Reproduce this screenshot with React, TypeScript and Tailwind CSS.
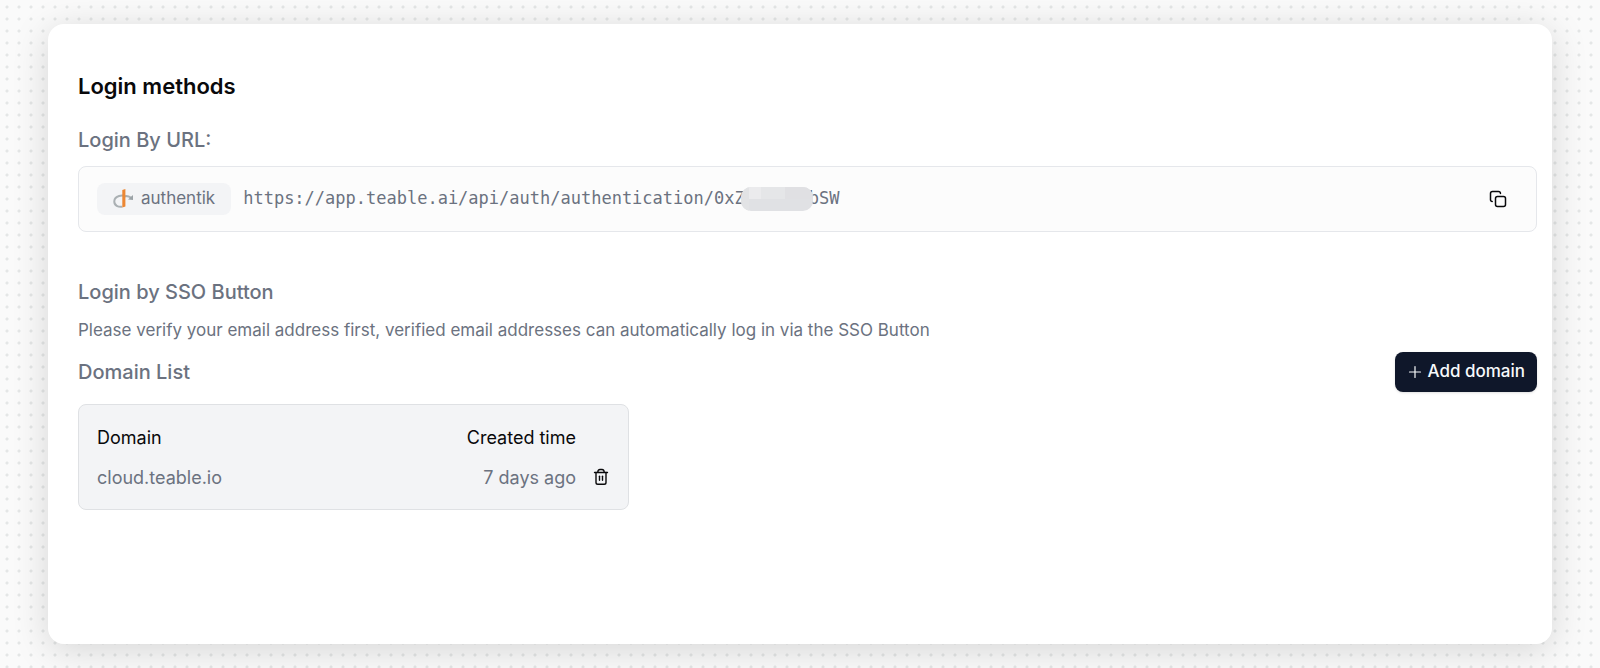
import React from "react";

function AuthentikLogo() {
  return (
    <svg width="20" height="20" viewBox="0 0 20 20" fill="none" aria-hidden="true">
      <path
        d="M13.5 7.6C9.5 5.4 1.6 6.6 1.3 12.2C1.1 16.6 5.4 18.3 9.2 17.7"
        stroke="#aab0b3"
        strokeWidth="2"
      />
      <path d="M13 7C15.4 7.2 17 8 18.4 8.8" stroke="#aab0b3" strokeWidth="1.8" />
      <path d="M20 6V11L15 10.4Z" fill="#9ba3a7" />
      <path d="M9.3 1L12.4 0V17.6L9.3 18.6Z" fill="#ec8733" />
    </svg>
  );
}

function CopyIcon() {
  return (
    <svg
      width="18"
      height="18"
      viewBox="0 0 18 18"
      fill="none"
      stroke="currentColor"
      strokeWidth="1.5"
      strokeLinecap="round"
      aria-hidden="true"
    >
      <rect x="6.5" y="6.5" width="10" height="10" rx="2" />
      <path d="M3.2 11.5C2.2 11.5 1.5 10.8 1.5 9.8V3.5C1.5 2.4 2.4 1.5 3.5 1.5H9.5C10.6 1.5 11.4 2.2 11.5 3.4" />
    </svg>
  );
}

function PlusIcon() {
  return (
    <svg
      width="16"
      height="16"
      viewBox="0 0 16 16"
      fill="none"
      stroke="currentColor"
      strokeWidth="1.2"
      strokeLinecap="round"
      aria-hidden="true"
    >
      <path d="M2.5 8H13.5M8 2.5V13.5" />
    </svg>
  );
}

function TrashIcon() {
  return (
    <svg
      width="18"
      height="18"
      viewBox="0 0 18 18"
      fill="none"
      stroke="currentColor"
      strokeWidth="1.4"
      strokeLinecap="round"
      strokeLinejoin="round"
      aria-hidden="true"
    >
      <path d="M2.5 4.5H15.5" />
      <path d="M4 4.5V14.5C4 15.6 4.8 16.3 5.8 16.3H12.2C13.2 16.3 14 15.6 14 14.5V4.5" />
      <path d="M5.8 4.3C5.8 2.4 6.6 1.5 8 1.5H10C11.4 1.5 12.2 2.4 12.2 4.3" />
      <path d="M7.5 8.3V12.3" />
      <path d="M10.5 8.3V12.3" />
    </svg>
  );
}

function CallbackUrl() {
  return (
    <div className="mt-3 flex items-center rounded-lg border border-[#e5e7eb] bg-[#fcfcfc] px-[18px] py-4">
      <span className="flex h-8 items-center gap-2 rounded-lg bg-[#f3f4f6] px-4 text-[17px]">
        <AuthentikLogo />
        authentik
      </span>
      <code className="ml-3 flex items-center font-['DejaVu_Sans_Mono',monospace] text-[17px]">
        <span>https://app.teable.ai/api/auth/authentication/0xZ</span>
        <span className="z-10 -mx-1 flex h-6 w-[72px] overflow-hidden rounded-[10px] bg-[#e0e1e4]">
          <span className="h-full w-2 bg-[#e2e3e5]" />
          <span className="h-3 w-3 bg-[#ebebed]" />
          <span className="h-3 w-6 bg-[#e5e6e8]" />
          <span className="h-3 grow bg-[#e0e0e3]" />
        </span>
        <span>bSW</span>
      </code>
      <button
        type="button"
        aria-label="Copy URL"
        className="mr-1 ml-auto flex size-8 items-center justify-center text-[#09090b]"
      >
        <CopyIcon />
      </button>
    </div>
  );
}

function DomainTable() {
  return (
    <div className="mt-3 w-full max-w-[551px] rounded-lg border border-[#dfe1e4] bg-[#f3f4f6] px-[18px] py-3">
      <table className="w-full text-[18px]">
        <thead>
          <tr className="h-10 text-[#09090b]">
            <th className="text-left font-normal">Domain</th>
            <th className="text-right font-normal">Created time</th>
            <td className="w-[34px]" />
          </tr>
        </thead>
        <tbody>
          <tr className="h-10">
            <td>cloud.teable.io</td>
            <td className="text-right">7 days ago</td>
            <td className="w-[34px]">
              <button
                type="button"
                aria-label="Delete domain"
                className="ml-auto block text-[#09090b]"
              >
                <TrashIcon />
              </button>
            </td>
          </tr>
        </tbody>
      </table>
    </div>
  );
}

export default function App() {
  return (
    <div className="flex min-h-screen flex-col bg-[#fafafa] bg-[radial-gradient(circle_at_7px_7px,#e4e6e6_1px,transparent_2px)] bg-size-[12px_12px] px-12 py-6 font-[Inter,sans-serif] text-[#6b7280]">
      <main className="grow rounded-2xl bg-white pt-12 pr-[15px] pl-[30px] shadow-[0_6px_36px_rgba(0,0,0,0.15)]">
        <h1 className="text-[22px] leading-7 font-semibold text-[#09090b]">Login methods</h1>

        <h2 className="mt-[26px] text-[20px] leading-7 font-medium">Login By URL:</h2>
        <CallbackUrl />

        <h2 className="mt-[46px] text-[20px] leading-7 font-medium">Login by SSO Button</h2>
        <p className="mt-3 text-[17px] leading-6">
          Please verify your email address first, verified email addresses can automatically log in
          via the SSO Button
        </p>

        <div className="mt-[10px] flex items-center justify-between">
          <h3 className="text-[20px] leading-7 font-medium">Domain List</h3>
          <button
            type="button"
            className="flex h-10 items-center gap-1 rounded-lg bg-[#0f172a] px-3 text-[17px] font-medium text-[#f8fafc] shadow-sm"
          >
            <PlusIcon />
            Add domain
          </button>
        </div>
        <DomainTable />
      </main>
    </div>
  );
}
